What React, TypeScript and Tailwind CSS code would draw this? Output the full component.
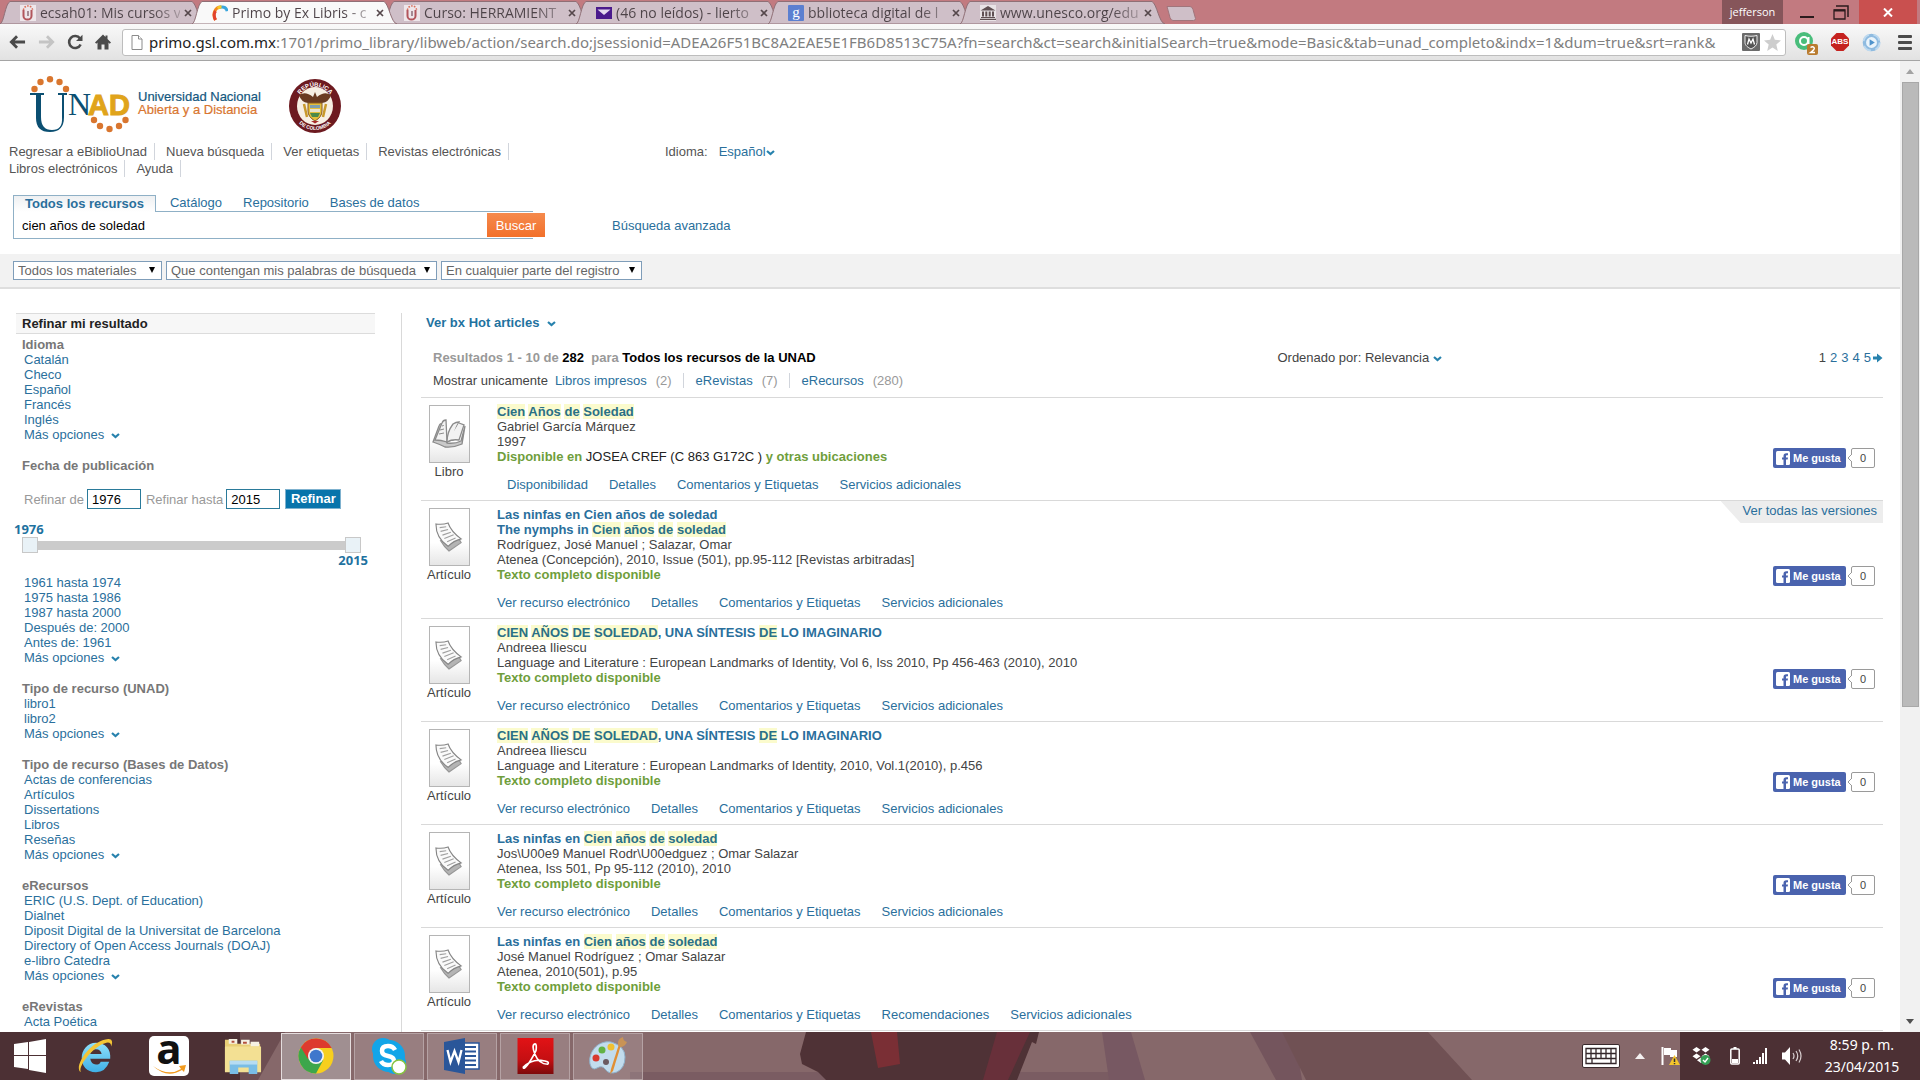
import type { ReactNode } from "react";

type Part = string | { hit: string };

const link = "text-[#2a6f9c] hover:underline";

/* ---------- browser chrome ---------- */

function UnadIcon() {
  return (
    <svg viewBox="0 0 16 16" className="h-4 w-4 shrink-0 bg-[#eee6ea]">
      <path d="M3.5 5v6a4 3.6 0 0 0 8 0V5" fill="none" stroke="#b2555c" strokeWidth="2" />
      <path d="M3.5 5a4.5 4 0 0 1 9 0" fill="none" stroke="#d9705c" strokeWidth="1.6" strokeDasharray="1.6 1.2" />
      <path d="M8 6v5" stroke="#7d5a66" strokeWidth="1.3" />
    </svg>
  );
}

function PrimoIcon() {
  return (
    <svg viewBox="0 0 16 16" className="h-4 w-4 shrink-0">
      <path d="M3.500 15C0 9 3 2 9 2" fill="none" stroke="#f28a1f" strokeWidth="3" />
      <path d="M8 2.200c4-.8 6.500 1 7.200 4" fill="none" stroke="#3aa6dd" strokeWidth="3" />
      <path d="M3.500 15C1.500 11 2 8 3.600 6" fill="none" stroke="#e2432d" strokeWidth="3" />
      <path d="M5.600 3.200C7 2.400 8 2 9.500 2.100" fill="none" stroke="#f6c928" strokeWidth="3" />
    </svg>
  );
}

function MailIcon() {
  return (
    <svg viewBox="0 0 16 16" className="h-4 w-4 shrink-0">
      <rect y="2" width="16" height="12" fill="#4a1a8c" />
      <path d="M1.500 4.500 8 10l6.500-5.500z" fill="#e4d9ee" />
    </svg>
  );
}

function GoogleIcon() {
  return (
    <span aria-hidden="true" className="flex h-4 w-4 shrink-0 items-center justify-center rounded-[1px] bg-[#5b7fd0] font-['Liberation_Serif',serif] text-[15px] leading-none text-white">
      g
    </span>
  );
}

function UnescoIcon() {
  return (
    <svg viewBox="0 0 16 16" className="h-4 w-4 shrink-0 bg-[#e9e3e6]" fill="#5f4f52">
      <path d="M8 1 0.500 5.500h15zM2 6.500h2v5H2zM5.300 6.500h2v5h-2zM8.700 6.500h2v5h-2zM12 6.500h2v5h-2zM1 12h14v1H1zM0 13.700h16V15H0z" />
    </svg>
  );
}

const tabs: { title: string; icon: ReactNode; active?: boolean }[] = [
  { title: "ecsah01: Mis cursos v", icon: <UnadIcon /> },
  { title: "Primo by Ex Libris - c", icon: <PrimoIcon />, active: true },
  { title: "Curso: HERRAMIENT", icon: <UnadIcon /> },
  { title: "(46 no leídos) - lierto", icon: <MailIcon /> },
  { title: "bblioteca digital de l", icon: <GoogleIcon /> },
  { title: "www.unesco.org/edu", icon: <UnescoIcon /> },
];

function TabStrip() {
  return (
    <header className="flex h-6 shrink-0 bg-[#c27a80] font-['Open_Sans',sans-serif]">
      <div className="flex min-w-0 pt-px pl-2">
        {tabs.map((t) => (
          <div key={t.title} className="relative flex w-48 items-center">
            <svg viewBox="0 0 206 23" preserveAspectRatio="none" className={t.active ? "absolute -left-2 z-10 h-full w-[206px]" : "absolute -left-2 h-full w-[206px]"}>
              <path d="M0 23C4 22 5 3 10 .5H192C197 3 199 22 205 23z" fill={t.active ? "#f9f9f9" : "#cfbfc8"} stroke="#8f6f76" strokeWidth="1" />
            </svg>
            <div className="relative z-10 flex w-full items-center gap-1 pr-2 pl-3">
              {t.icon}
              <span className="min-w-0 flex-1 bg-linear-to-r from-[#4d4348] from-80% to-[#4d4348]/30 bg-clip-text text-[14px] leading-5 whitespace-nowrap text-transparent">{t.title}</span>
              <button aria-label="Cerrar pestaña" className="w-2">
                <svg viewBox="0 0 8 8" className="h-2 w-2">
                  <path d="M1 1l6 6M7 1L1 7" stroke="#55474b" strokeWidth="1.700" />
                </svg>
              </button>
            </div>
          </div>
        ))}
        <button aria-label="Nueva pestaña" className="mt-[5px] ml-1.5 h-[15px] w-[30px]">
          <svg viewBox="0 0 30 15" className="h-full w-full">
            <path d="M1 .5h23q2 0 3 3l2.500 9q0 2-2 2H7q-2 0-3-3z" fill="#cfbfc8" stroke="#a0757b" />
          </svg>
        </button>
      </div>
      <div className="ml-auto flex pr-[3px]">
        <span className="flex w-[61px] items-center justify-center bg-[#86555a] text-[11px] text-white">jefferson</span>
        <button aria-label="Minimizar" className="flex w-12 items-end justify-center pb-1.5">
          <span className="h-0.5 w-3.5 bg-[#2b1b1d]" />
        </button>
        <button aria-label="Restaurar" className="flex w-7 items-center justify-start pl-0.5">
          <svg viewBox="0 0 16 15" className="h-[15px] w-4" fill="none" stroke="#2b1b1d">
            <path d="M3 1h12v11" strokeWidth="1.500" />
            <path d="M1 5h11v9H1z" strokeWidth="1.300" />
            <path d="M1 5.500h11" strokeWidth="2" />
          </svg>
        </button>
        <button aria-label="Cerrar" className="flex w-[58px] items-center justify-center bg-[#c9504f]">
          <svg viewBox="0 0 10 9" className="h-[9px] w-2.5">
            <path d="M1 .5l8 8M9 .5l-8 8" stroke="#fff" strokeWidth="2" />
          </svg>
        </button>
      </div>
    </header>
  );
}

function Toolbar() {
  return (
    <div className="flex h-[37px] shrink-0 items-center border-b border-[#a5a5a5] bg-linear-to-b from-[#f9f9f9] to-[#e2e2e2] pr-2 pl-[9px]">
      <div className="flex w-[113px] items-center gap-3">
        <button aria-label="Atrás">
          <svg viewBox="0 0 18 16" className="h-4 w-[17px]">
            <path d="M17 8H3M8.500 2 2.500 8l6 6" fill="none" stroke="#4a4a4a" strokeWidth="3" />
          </svg>
        </button>
        <button aria-label="Adelante">
          <svg viewBox="0 0 18 16" className="h-4 w-[17px]">
            <path d="M1 8h14M9.500 2l6 6-6 6" fill="none" stroke="#c4c4c4" strokeWidth="3" />
          </svg>
        </button>
        <button aria-label="Recargar">
          <svg viewBox="0 0 16 16" className="h-4 w-4">
            <path d="M13 4.500A6 6 0 1 0 13.600 10.500" fill="none" stroke="#4a4a4a" strokeWidth="2.600" />
            <path d="M15.500.8V7H9z" fill="#4a4a4a" />
          </svg>
        </button>
        <button aria-label="Inicio">
          <svg viewBox="0 0 16 16" className="h-4 w-4" fill="#4a4a4a">
            <path d="M8 .5 0 8.500l1.300 1.200L2.500 8.500V15.500h4v-5h3v5h4v-7l1.200 1.200L16 8.500 12.500 5V1.500h-2V3z" />
          </svg>
        </button>
      </div>
      <div className="flex h-[27px] min-w-0 flex-1 items-center rounded-[3px] border border-[#bdbdbd] bg-white px-1">
        <svg viewBox="0 0 12 15" className="mr-1.5 ml-1 h-[15px] w-3 shrink-0" fill="#fff" stroke="#8b8b8b">
          <path d="M1 .5h6.500L11 4v10.500H1z" />
          <path d="M7.500.5V4H11" />
        </svg>
        <p className="min-w-0 flex-1 overflow-hidden font-['Noto_Sans',sans-serif] text-[15px] leading-6 whitespace-nowrap text-[#808080]">
          <span className="text-[#222]">primo.gsl.com.mx</span>:1701/primo_library/libweb/action/search.do;jsessionid=ADEA26F51BC8A2EAE5E1FB6D8513C75A?fn=search&amp;ct=search&amp;initialSearch=true&amp;mode=Basic&amp;tab=unad_completo&amp;indx=1&amp;dum=true&amp;srt=rank&amp;
        </p>
        <svg viewBox="0 0 18 18" className="mr-1 h-[18px] w-[18px] shrink-0">
          <rect width="18" height="18" rx="1" fill="#6b6b6b" />
          <path d="M3 2.500c4 1 8 1 12 0v7c0 3-3 5-6 6.500-3-1.500-6-3.500-6-6.500z" fill="#555" stroke="#eee" />
          <path d="M5.500 11.500 7 6l2 4 2-4 1.500 5.500" fill="none" stroke="#fff" strokeWidth="1.300" />
        </svg>
        <svg viewBox="0 0 16 16" className="h-[17px] w-[17px] shrink-0" fill="#cdcdcd">
          <path d="M8 0l2.200 5.500 5.800.5-4.400 3.800L13 16 8 12.600 3 16l1.400-6.200L0 6l5.800-.5z" />
        </svg>
      </div>
      <div className="flex items-center gap-[13px] pl-2">
        <svg viewBox="0 0 24 26" className="h-[26px] w-6">
          <circle cx="10" cy="12" r="9" fill="#49bd7b" />
          <circle cx="10" cy="12" r="4" fill="none" stroke="#fff" strokeWidth="2" />
          <path d="M14.500 8v7.500" stroke="#fff" strokeWidth="2" />
          <rect x="13" y="15" width="11" height="11" rx="2" fill="#b97b2e" />
          <path d="M16.500 18.500q2-1.500 3.500 0t-3.500 5H21" fill="none" stroke="#fff" strokeWidth="1.400" />
        </svg>
        <span className="relative flex h-[18px] w-[18px] items-center justify-center font-['Liberation_Sans',sans-serif] text-[8px] leading-none font-bold text-white">
          <svg viewBox="0 0 18 18" className="absolute inset-0 h-full w-full">
            <path d="M5.500 0h7L18 5.500v7L12.500 18h-7L0 12.500v-7z" fill="#c5221f" />
          </svg>
          <span className="relative">ABS</span>
        </span>
        <svg viewBox="0 0 20 20" className="h-[19px] w-[19px]">
          <circle cx="10" cy="10" r="7.500" fill="#eaf4fb" stroke="#8fbbe0" strokeWidth="3.500" />
          <circle cx="10" cy="10" r="8.500" fill="none" stroke="#bdd9ef" strokeWidth="2" strokeDasharray="9 5" />
          <path d="M8 6.500v7l5.500-3.500z" fill="#4f93cc" />
        </svg>
        <button aria-label="Menú" className="ml-1 flex w-3.5 flex-col gap-[3px]">
          <span className="h-[3px] rounded-[1px] bg-[#4a4a4a]" />
          <span className="h-[3px] rounded-[1px] bg-[#4a4a4a]" />
          <span className="h-[3px] rounded-[1px] bg-[#4a4a4a]" />
        </button>
      </div>
    </div>
  );
}

/* ---------- library page ---------- */

function Chevron() {
  return (
    <svg viewBox="0 0 9 6" className="inline-block h-1.5 w-[9px]">
      <path d="M1 1l3.500 3L8 1" fill="none" stroke="#2782ad" strokeWidth="2.200" />
    </svg>
  );
}

function UnadLogo() {
  return (
    <svg viewBox="0 0 236 60" className="h-[60px] w-[236px]" role="img" aria-label="UNAD Universidad Nacional Abierta y a Distancia">
      <g fill="#d9762f">
        <circle cx="4.500" cy="13" r="3.200" />
        <circle cx="10.500" cy="6" r="3.200" />
        <circle cx="20" cy="3.200" r="3.200" />
        <circle cx="29.500" cy="6" r="3.200" />
        <circle cx="36" cy="13" r="3.200" />
        <circle cx="64" cy="44" r="3.200" />
        <circle cx="70" cy="50" r="3.200" />
        <circle cx="79.500" cy="53" r="3.200" />
        <circle cx="89" cy="50" r="3.200" />
        <circle cx="95.500" cy="44" r="3.200" />
      </g>
      <path d="M0 17h14v2h-3v22q0 13 11 13t10-13V19h-4v-2h9v2h-3v22q0 15-14 15T6 42V19H0z" fill="#0b4f72" />
      <text x="38" y="39" fontFamily="Liberation Serif, serif" fontSize="32" fill="#0b4f72">N</text>
      <text x="58" y="39" fontFamily="Liberation Sans, sans-serif" fontSize="29" fontWeight="bold" fill="#e0a41b" stroke="#e0a41b" strokeWidth="1">AD</text>
      <text x="108" y="25" fontFamily="Liberation Sans, sans-serif" fontSize="13" fill="#14577e" stroke="#14577e" strokeWidth=".2">Universidad Nacional</text>
      <text x="108" y="38" fontFamily="Liberation Sans, sans-serif" fontSize="13" fill="#d97630" stroke="#d97630" strokeWidth=".2">Abierta y a Distancia</text>
    </svg>
  );
}

function Seal() {
  return (
    <svg viewBox="0 0 54 56" className="h-14 w-[54px]" role="img" aria-label="República de Colombia">
      <defs>
        <path id="arc-top" d="M8.500 28a18.500 19.500 0 0 1 37 0" />
        <path id="arc-bottom" d="M4 28a23 24 0 0 0 46 0" />
      </defs>
      <ellipse cx="27" cy="28" rx="26" ry="27" fill="#6d1a20" />
      <ellipse cx="27" cy="28" rx="18" ry="19" fill="#f7efe3" />
      <text fontFamily="Liberation Sans, sans-serif" fontSize="6" fontWeight="bold" fill="#fff">
        <textPath href="#arc-top" startOffset="50%" textAnchor="middle">REPÚBLICA</textPath>
      </text>
      <text fontFamily="Liberation Sans, sans-serif" fontSize="5" fontWeight="bold" fill="#fff">
        <textPath href="#arc-bottom" startOffset="50%" textAnchor="middle">DE COLOMBIA</textPath>
      </text>
      <path d="M11 17q5-3 9-1 3 1 5 3l2-5 2 5q2-2 5-3 4-2 9 1-2 7-9 8H20q-7-1-9-8z" fill="#6a3b22" />
      <path d="M20 25h14v8q0 6-7 10-7-4-7-10z" fill="#e4be3b" stroke="#8a5a24" />
      <path d="M22 27h10v3H22z" fill="#7f9fae" />
      <path d="M22 31h10v3H22z" fill="#e9e2cf" />
      <path d="M22 35h10l-2 4h-6z" fill="#4d8a4a" />
      <path d="M16 26l3 13M38 26l-3 13" stroke="#c9992b" strokeWidth="2.500" />
      <path d="M23 43h8l-4 2.500z" fill="#a82a2a" />
    </svg>
  );
}

function NavRow({ items }: { items: string[] }) {
  return (
    <div className="flex">
      {items.map((n) => (
        <a key={n} href="#" className="mr-[11px] border-r border-gray-300 pr-[7px] leading-[17px] text-[#555]">
          {n}
        </a>
      ))}
    </div>
  );
}

function PageHeader() {
  return (
    <div className="pt-[15px]">
      <div className="flex items-center gap-[22px] pl-[30px]">
        <UnadLogo />
        <Seal />
      </div>
      <div className="mt-[7px] flex pl-[9px]">
        <nav className="w-[656px]">
          <NavRow items={["Regresar a eBiblioUnad", "Nueva búsqueda", "Ver etiquetas", "Revistas electrónicas"]} />
          <NavRow items={["Libros electrónicos", "Ayuda"]} />
        </nav>
        <span className="leading-[17px] text-[#555]">Idioma:</span>
        <a href="#" className={`ml-[11px] leading-[17px] ${link}`}>
          Español
          <Chevron />
        </a>
      </div>
    </div>
  );
}

function SearchBox() {
  return (
    <form className="mt-[18px] flex pl-[13px]">
      <div className="w-[532px]">
        <div className="flex items-end text-[13px]">
          <a href="#" className="z-10 -mb-px border border-b-0 border-[#8fb0c6] bg-linear-to-b from-[#eef0f2] to-white px-[11px] leading-4 font-bold text-[#2a6f9c]">
            Todos los recursos
          </a>
          {["Catálogo", "Repositorio", "Bases de datos"].map((t, i) => (
            <a key={t} href="#" className={i === 0 ? `ml-3.5 leading-4 ${link}` : `ml-[21px] leading-4 ${link}`}>
              {t}
            </a>
          ))}
        </div>
        <div className="flex items-center border-y border-l border-[#8fb0c6] py-px [border-image:linear-gradient(to_right,#8fb0c6_97.5%,transparent_97.5%)_1]">
          <input aria-label="Buscar" defaultValue="cien años de soledad" className="h-6 min-w-0 flex-1 px-2 text-black outline-none" />
          <button type="button" className="h-6 w-[58px] bg-linear-to-b from-[#f58a4c] to-[#f2702a] text-white">
            Buscar
          </button>
        </div>
      </div>
      <a href="#" className={`mt-[23px] ml-[67px] leading-4 ${link}`}>
        Búsqueda avanzada
      </a>
    </form>
  );
}

function FilterSelect({ label, width }: { label: string; width: string }) {
  return (
    <span className={`relative ${width}`}>
      <select aria-label={label} className="h-[19px] w-full appearance-none border border-[#7f9db9] bg-white pl-1 text-[13px] leading-4 text-[#666]">
        <option>{label}</option>
      </select>
      <span className="pointer-events-none absolute top-[6px] right-[7px] border-x-[3px] border-t-[6px] border-x-transparent border-t-black" />
    </span>
  );
}

function Facet({ title, items }: { title: string; items: string[] }) {
  return (
    <section className="mb-4">
      <h3 className="pl-[6px] font-bold text-[#777]">{title}</h3>
      <FacetList items={items} />
    </section>
  );
}

function FacetList({ items }: { items: string[] }) {
  return (
    <ul className="pl-2">
      {items.map((it) => (
        <li key={it}>
          <a href="#" className={link}>
            {it}
          </a>
        </li>
      ))}
      <li>
        <a href="#" className={link}>
          Más opciones <span className="ml-[3px]"><Chevron /></span>
        </a>
      </li>
    </ul>
  );
}

function Sidebar() {
  return (
    <aside className="w-[359px] shrink-0">
      <h2 className="mb-[3px] border-y border-[#dcdcdc] bg-[#f7f7f7] pl-1.5 leading-[19px] font-bold text-[#222]">Refinar mi resultado</h2>
      <Facet title="Idioma" items={["Catalán", "Checo", "Español", "Francés", "Inglés"]} />
      <section className="mb-4">
        <h3 className="pl-[6px] font-bold text-[#777]">Fecha de publicación</h3>
        <div className="mt-4 flex items-center pl-2 text-[#999]">
          <label htmlFor="from">Refinar de</label>
          <input id="from" defaultValue="1976" className="ml-[3px] h-5 w-[54px] border border-[#2a7a9a] px-1 text-black" />
          <label htmlFor="to" className="ml-[5px]">Refinar hasta</label>
          <input id="to" defaultValue="2015" className="ml-[3px] h-5 w-[54px] border border-[#2a7a9a] px-1 text-black" />
          <button className="ml-[5px] h-5 w-14 border border-[#7fb2cf] bg-[#0874ab] leading-4 font-bold text-white">Refinar</button>
        </div>
        <div className="mt-[13px] -ml-0.5 font-['Open_Sans',sans-serif] font-bold text-[#1f72a0]">1976</div>
        <div className="ml-[6px] flex w-[339px] items-center">
          <button aria-label="Año inicial" className="h-4 w-4 border border-[#c8c8c8] bg-[#e9f2f7]" />
          <span className="h-[9px] flex-1 bg-[#cbcbcb]" />
          <button aria-label="Año final" className="h-4 w-4 border border-[#c8c8c8] bg-[#e9f2f7]" />
        </div>
        <div className="mr-[7px] mb-[7px] text-right font-['Open_Sans',sans-serif] font-bold text-[#1f72a0]">2015</div>
        <FacetList items={["1961 hasta 1974", "1975 hasta 1986", "1987 hasta 2000", "Después de: 2000", "Antes de: 1961"]} />
      </section>
      <Facet title="Tipo de recurso (UNAD)" items={["libro1", "libro2"]} />
      <Facet title="Tipo de recurso (Bases de Datos)" items={["Actas de conferencias", "Artículos", "Dissertations", "Libros", "Reseñas"]} />
      <Facet
        title="eRecursos"
        items={["ERIC (U.S. Dept. of Education)", "Dialnet", "Diposit Digital de la Universitat de Barcelona", "Directory of Open Access Journals (DOAJ)", "e-libro Catedra"]}
      />
      <Facet title="eRevistas" items={["Acta Poética", "Andamios"]} />
    </aside>
  );
}

function BookIcon() {
  return (
    <svg viewBox="0 0 36 32" className="h-8 w-9" fill="#f2f2f2" stroke="#8b8b8b" strokeWidth="1.300">
      <path d="M2 24 8 8q1-3 3-2l5 19q8 1 14-2l4-15-3 18q-9 4-17 3-6-3-12-5z" fill="#c9c9c9" />
      <path d="M4 22 11 5q1-3 4-3l1 22q-6-2-12-2z" />
      <path d="M16 24q0-10 6-18 3-2 6-2-5 8-6 18-3 0-6 2z" />
      <path d="M16 24q5-3 12-2l5-15-5-2" />
      <path d="M11 8q2-1 2 0M9 12l4-1M8 16l5-1" strokeWidth="1" />
    </svg>
  );
}

function ArticleIcon() {
  return (
    <svg viewBox="0 0 30 32" className="h-[30px] w-7" strokeWidth="1.200">
      <path d="M6 20q4 7 9 11l13-9-3-5z" fill="#b4b4b4" stroke="#969696" />
      <path d="M1 2q7 1 13-1 3 9 14 17-8 2-14 8Q1 17 1 2z" fill="#fafafa" stroke="#858585" />
      <path d="M5 6l7-1M6 10l8-2M8 14l9-3M10 17.500l10-4M13 21l9-4" stroke="#a0a0a0" fill="none" />
    </svg>
  );
}

type Result = { kind: "Libro" | "Artículo"; titles: Part[][]; author: string; source: string; links: string[]; versions?: boolean };

const base = ["Ver recurso electrónico", "Detalles", "Comentarios y Etiquetas"];
const phrase: Part[] = [{ hit: "Cien" }, " ", { hit: "años" }, " ", { hit: "de" }, " ", { hit: "soledad" }];
const synthesis: Part[] = [{ hit: "CIEN" }, " ", { hit: "AÑOS" }, " ", { hit: "DE" }, " ", { hit: "SOLEDAD" }, ", UNA SÍNTESIS ", { hit: "DE" }, " LO IMAGINARIO"];

const results: Result[] = [
  {
    kind: "Libro",
    titles: [[{ hit: "Cien" }, " ", { hit: "Años" }, " ", { hit: "de" }, " ", { hit: "Soledad" }]],
    author: "Gabriel García Márquez",
    source: "1997",
    links: ["Disponibilidad", "Detalles", "Comentarios y Etiquetas", "Servicios adicionales"],
  },
  {
    kind: "Artículo",
    titles: [["Las ninfas en Cien años de soledad"], ["The nymphs in ", ...phrase]],
    author: "Rodríguez, José Manuel ; Salazar, Omar",
    source: "Atenea (Concepción), 2010, Issue (501), pp.95-112 [Revistas arbitradas]",
    links: [...base, "Servicios adicionales"],
    versions: true,
  },
  {
    kind: "Artículo",
    titles: [synthesis],
    author: "Andreea Iliescu",
    source: "Language and Literature : European Landmarks of Identity, Vol 6, Iss 2010, Pp 456-463 (2010), 2010",
    links: [...base, "Servicios adicionales"],
  },
  {
    kind: "Artículo",
    titles: [synthesis],
    author: "Andreea Iliescu",
    source: "Language and Literature : European Landmarks of Identity, 2010, Vol.1(2010), p.456",
    links: [...base, "Servicios adicionales"],
  },
  {
    kind: "Artículo",
    titles: [["Las ninfas en ", ...phrase]],
    author: "Jos\\U00e9 Manuel Rodr\\U00edguez ; Omar Salazar",
    source: "Atenea, Iss 501, Pp 95-112 (2010), 2010",
    links: [...base, "Servicios adicionales"],
  },
  {
    kind: "Artículo",
    titles: [["Las ninfas en ", ...phrase]],
    author: "José Manuel Rodríguez ; Omar Salazar",
    source: "Atenea, 2010(501), p.95",
    links: [...base, "Recomendaciones", "Servicios adicionales"],
  },
];

function LikeButton() {
  return (
    <div className="flex items-center">
      <button className="flex h-5 w-[73px] items-center gap-[3px] rounded-[2px] bg-[#4a63ae] pl-[3px] text-[11px] font-bold text-white">
        <svg viewBox="0 0 14 14" className="h-3.5 w-3.5 shrink-0">
          <rect width="14" height="14" rx="1.500" fill="#fff" />
          <path d="M7.500 14V8.500H6v-2h1.500V5q0-2.700 2.700-2.700H12v2h-1.200Q10 4.300 10 5v1.500h2l-.3 2H10V14z" fill="#4a63ae" />
        </svg>
        Me gusta
      </button>
      <svg viewBox="0 0 6 8" className="z-10 -mr-px h-2 w-1.5">
        <path d="M6 0 2 4l4 4" fill="#fff" stroke="#9a9a9a" />
      </svg>
      <span className="flex h-5 w-6 items-center justify-center rounded-[2px] border border-[#9a9a9a] bg-white text-[11px] text-[#444]">0</span>
    </div>
  );
}

function ResultRow({ r }: { r: Result }) {
  const book = r.kind === "Libro";
  return (
    <li className="relative flex border-t border-[#d9d9d9] pl-1.5">
      <div className="mt-[7px] flex w-11 flex-col items-center">
        <span className="flex h-[58px] w-[41px] items-center justify-center border border-[#b5b5b5] bg-linear-to-b from-white from-60% to-[#e6e6e6]">
          {book ? <BookIcon /> : <ArticleIcon />}
        </span>
        <span className="mt-px text-[#444]">{r.kind}</span>
      </div>
      <div className="mt-1.5 ml-[26px] min-w-0 flex-1 text-[#444]">
        {r.titles.map((parts, i) => (
          <h3 key={i} className="font-bold">
            <a href="#" className={link}>
              {parts.map((p, j) =>
                typeof p === "string" ? p : <mark key={j} className="bg-[#fbfbcd] text-[#2a7086]">{p.hit}</mark>,
              )}
            </a>
          </h3>
        ))}
        <p>{r.author}</p>
        <p>{r.source}</p>
        <p className="font-bold text-[#6f9e3c]">
          {book ? (
            <>
              Disponible en <span className="font-normal text-[#222]">JOSEA CREF (C 863 G172C )</span> y otras ubicaciones
            </>
          ) : (
            "Texto completo disponible"
          )}
        </p>
        <div className={book ? "mt-[13px] mb-2 flex gap-[21px] pl-2.5" : "mt-[13px] mb-2 flex gap-[21px]"}>
          {r.links.map((l) => (
            <a key={l} href="#" className={link}>
              {l}
            </a>
          ))}
        </div>
      </div>
      <div className="mr-2 mb-8 self-end">
        <LikeButton />
      </div>
      {r.versions && (
        <a href="#" className="absolute top-0 right-0 h-[22px] bg-[#ededed] pr-1.5 pl-[22px] leading-5 text-[#2a6f9c] [clip-path:polygon(0_0,100%_0,100%_100%,20px_100%)]">
          Ver todas las versiones
        </a>
      )}
    </li>
  );
}

function Results() {
  return (
    <main className="ml-[26px] min-w-0 flex-1 border-l border-[#d9d9d9] pr-[17px] pl-[19px]">
      <a href="#" className="ml-[5px] block pt-0.5 font-bold text-[#1f72a0]">
        Ver bx Hot articles <span className="ml-1"><Chevron /></span>
      </a>
      <div className="mt-5 flex items-center pl-3">
        <p className="flex-1 font-bold whitespace-pre text-[#999]">
          Resultados 1 - 10 de <span className="text-black">282</span>{"  "}para <span className="text-black">Todos los recursos de la UNAD</span>
        </p>
        <p className="text-[#444]">
          Ordenado por: <button>Relevancia <Chevron /></button>
        </p>
        <nav className="ml-[377px] flex items-center gap-1">
          <span className="text-[#444]">1</span>
          {["2", "3", "4", "5"].map((n) => (
            <a key={n} href="#" className={link}>
              {n}
            </a>
          ))}
          <a href="#" aria-label="Siguiente" className="-ml-0.5">
            <svg viewBox="0 0 10 10" className="h-2.5 w-2.5">
              <path d="M0 3.500h4V.5L9.500 5 4 9.500v-3H0z" fill="#2782ad" />
            </svg>
          </a>
        </nav>
      </div>
      <div className="mt-2 flex pb-[9px] pl-3">
        <span className="mr-[7px] text-[#444]">Mostrar unicamente</span>
        {[
          ["Libros impresos", "(2)"],
          ["eRevistas", "(7)"],
          ["eRecursos", "(280)"],
        ].map(([name, count], i) => (
          <span key={name} className={i < 2 ? "mr-3 flex gap-[9px] border-r border-gray-300 pr-[11px]" : "flex gap-[9px]"}>
            <a href="#" className={link}>
              {name}
            </a>
            <span className="text-[#999]">{count}</span>
          </span>
        ))}
      </div>
      <ul className="border-b border-[#d9d9d9]">
        {results.map((r, i) => (
          <ResultRow key={i} r={r} />
        ))}
      </ul>
    </main>
  );
}

function Scrollbar() {
  return (
    <div className="flex w-5 shrink-0 flex-col items-center bg-[#f1f1f1] py-2">
      <span className="border-x-[4px] border-b-[5px] border-x-transparent border-b-[#a3a3a3]" />
      <div className="mt-2 w-[17px] flex-1">
        <div className="h-2/3 border border-[#a8a8a8] bg-[#bababa]" />
      </div>
      <span className="border-x-[4px] border-t-[5px] border-x-transparent border-t-[#505050]" />
    </div>
  );
}

/* ---------- taskbar ---------- */

function WindowsIcon() {
  return (
    <svg viewBox="0 0 32 34" className="h-[34px] w-8" fill="#fff">
      <path d="M0 5l14-2v13H0zM15 3l17-3v16H15zM0 17h14v13L0 28zM15 17h17v17l-17-3z" />
    </svg>
  );
}

function ExplorerIcon() {
  return (
    <svg viewBox="0 0 40 40" className="h-[38px] w-10">
      <defs>
        <linearGradient id="ie" x1="0" y1="0" x2="0" y2="1">
          <stop offset="0" stopColor="#8fe0fa" />
          <stop offset="1" stopColor="#3fb0e6" />
        </linearGradient>
      </defs>
      <path d="M21 6c10 0 16 7 15 17H15q1 6 6 6 4 0 5-3h9q-4 11-14 11C11 37 6 30 6 22S12 6 21 6zm0 7q-5 0-6 5h12q-1-5-6-5z" fill="url(#ie)" />
      <path d="M5 37C-3 32 14 4 34 2q6 0 3 8 0-5-5-4C19 9 2 30 5 37z" fill="#f4c535" />
    </svg>
  );
}

function AmazonIcon() {
  return (
    <svg viewBox="0 0 40 40" className="h-10 w-10">
      <rect width="40" height="40" rx="5" fill="#fff" />
      <text x="20" y="28" textAnchor="middle" fontFamily="Open Sans, sans-serif" fontSize="42" fontWeight="bold" fill="#111">a</text>
      <path d="M4 30q15 11 28 3l-2-3 7-1-2 7-2-2Q18 43 4 30z" fill="#f29a1d" />
    </svg>
  );
}

function FolderIcon() {
  return (
    <svg viewBox="0 0 40 40" className="h-[38px] w-10">
      <path d="M1 3h11l2 4h24v29H1z" fill="#e9cf77" />
      <path d="M5 2h9v5H5zM18 3h9v5h-9zM28 5h9v5h-9z" fill="#f5f1e4" />
      <path d="M8 4h3v2H8zM20 5h4v2h-4z" fill="#b5523c" />
      <path d="M1 10h38v27H1z" fill="#f3e093" />
      <path d="M6 25h29v14h-9v-7H15v7H6z" fill="#79bde6" />
      <path d="M6 25h29v4H6z" fill="#b6dcf2" />
    </svg>
  );
}

function ChromeIcon() {
  return (
    <svg viewBox="0 0 36 36" className="h-9 w-9">
      <circle cx="18" cy="18" r="17.500" fill="#f7cf1e" />
      <path d="M18 18 2.900 9.200A17.500 17.500 0 0 0 18 35.500l7-13z" fill="#3da64b" />
      <path d="M2.900 9.200a17.500 17.500 0 0 1 30.800.8H18l-8 11z" fill="#dd3a2e" />
      <circle cx="18" cy="18" r="8" fill="#f4f4f4" />
      <circle cx="18" cy="18" r="6.300" fill="#3e77cc" />
    </svg>
  );
}

function SkypeIcon() {
  return (
    <svg viewBox="0 0 36 38" className="h-[38px] w-9">
      <circle cx="12" cy="12" r="11" fill="#12a5e8" />
      <circle cx="24" cy="26" r="11" fill="#12a5e8" />
      <circle cx="18" cy="19" r="16" fill="#12a5e8" />
      <path d="M24 11q-2-4-7-4-6 0-6 5 0 4 6 5t6 5q0 4-6 4-5 0-7-4" transform="translate(0 2)" fill="none" stroke="#fff" strokeWidth="4.500" />
      <circle cx="28" cy="30" r="7" fill="#fff" stroke="#86c440" strokeWidth="1.500" />
    </svg>
  );
}

function WordIcon() {
  return (
    <svg viewBox="0 0 36 38" className="h-[38px] w-9">
      <path d="M19 6h16v26H19z" fill="#fff" stroke="#2a5699" strokeWidth="1.500" />
      <path d="M21 10h11M21 14.500h11M21 19h11M21 23.500h11M21 28h11" stroke="#2a5699" strokeWidth="2" />
      <path d="M0 5l21-4v36L0 33z" fill="#2a5699" />
      <path d="M3.500 13l3 12 4-11 4 11 3-12" fill="none" stroke="#fff" strokeWidth="2.300" />
    </svg>
  );
}

function AcrobatIcon() {
  return (
    <svg viewBox="0 0 37 37" className="h-9 w-[37px]">
      <defs>
        <linearGradient id="pdf" x1="0" y1="0" x2="0" y2="1">
          <stop offset="0" stopColor="#e21316" />
          <stop offset=".6" stopColor="#c50f12" />
          <stop offset="1" stopColor="#7d090b" />
        </linearGradient>
      </defs>
      <rect width="37" height="37" fill="url(#pdf)" />
      <path d="M18 6q-4 1 0 11t13 10q3-3-7-4T6 30q0 3 4-2t9-15q1-7-1-7z" fill="none" stroke="#fff" strokeWidth="1.700" />
    </svg>
  );
}

function PaintIcon() {
  return (
    <svg viewBox="0 0 38 38" className="h-[38px] w-[38px]">
      <path d="M22 5C8 3-1 16 1 27q2 7 7 4t8 1q4 6 12 3 8-4 8-15T22 5z" fill="#c2dced" stroke="#8fb2cc" />
      <circle cx="7" cy="21" r="3.500" fill="#d8392f" />
      <circle cx="13" cy="13" r="3.500" fill="#62b245" />
      <circle cx="22" cy="10" r="3.500" fill="#f0c030" />
      <circle cx="17" cy="25" r="3" fill="#6a5a60" />
      <path d="M32 8 24 34l-3 3 1-5 8-25z" fill="#e08f35" />
      <path d="M29 8q-1-6 5-8 0 4 4 5-2 5-7 5z" fill="#c99356" />
    </svg>
  );
}

const pinned = [
  { name: "Internet Explorer", icon: <ExplorerIcon /> },
  { name: "Amazon", icon: <AmazonIcon /> },
  { name: "Explorador de archivos", icon: <FolderIcon /> },
];
const running = [
  { name: "Google Chrome", icon: <ChromeIcon />, active: true },
  { name: "Skype", icon: <SkypeIcon /> },
  { name: "Word", icon: <WordIcon /> },
  { name: "Adobe Reader", icon: <AcrobatIcon /> },
  { name: "Paint", icon: <PaintIcon /> },
];

function Tray() {
  return (
    <div className="flex items-center text-white">
      <svg viewBox="0 0 38 24" className="mr-[15px] h-6 w-[38px]">
        <rect x=".5" y=".5" width="37" height="23" rx="1.500" fill="#fff" stroke="#3a2a2d" />
        <path d="M4 4.500h30v5H4zM4 9.500h30v5H4zM4 14.500h30v5H4zM9 4.500v10M14 4.500v10M19 4.500v10M24 4.500v10M29 4.500v15M10 14.500v5" fill="none" stroke="#33272a" strokeWidth="1.300" />
      </svg>
      <svg viewBox="0 0 10 6" className="mr-4 h-1.5 w-2.5" fill="#f4f0f0">
        <path d="M5 0l5 6H0z" />
      </svg>
      <svg viewBox="0 0 20 20" className="mr-2.5 h-5 w-5">
        <path d="M1.500 1v18" stroke="#fff" strokeWidth="2" />
        <path d="M3 2h7v2h6v7h-7V9H3z" fill="#fff" />
        <path d="M13.500 9l5.500 10H8z" fill="#f5c62c" />
        <path d="M13.500 12.500v3.500M13.500 17v1.300" stroke="#333" strokeWidth="1.500" />
      </svg>
      <svg viewBox="0 0 20 20" className="mr-[19px] h-5 w-5" fill="#fff">
        <path d="M5.500 1l4 2.700-4 2.700-4-2.700zM14.500 1l4 2.700-4 2.700-4-2.700zM5.500 7.500l4 2.700-4 2.700-4-2.700zM14.500 7.500l4 2.700-4 2.700-4-2.700zM10 11.500l4 2.700-4 2.700-4-2.700z" />
        <circle cx="14.500" cy="14" r="5" fill="#35a055" />
        <path d="M12 14l2 2 3-4" fill="none" stroke="#fff" strokeWidth="1.400" />
      </svg>
      <svg viewBox="0 0 10 18" className="mr-[13px] h-[18px] w-2.5">
        <path d="M3.500 0h3v2h-3zM2 12h6v4H2z" fill="#fff" />
        <rect x=".8" y="2" width="8.400" height="15" rx="1" fill="none" stroke="#fff" strokeWidth="1.500" />
      </svg>
      <svg viewBox="0 0 15 16" className="mr-3.5 h-4 w-[15px]" fill="#fff">
        <path d="M0 14h2v2H0zM3 12h2v4H3zM6 9h2v7H6zM9 5h2v11H9zM12 0h2v16h-2z" />
      </svg>
      <svg viewBox="0 0 20 18" className="mr-5 h-[18px] w-5">
        <path d="M0 5.500h3L8 0v18l-5-5.500H0z" fill="#fff" />
        <path d="M11 6q2 3 0 6M14 4q3.500 5 0 10M17 2.500q4 6.500 0 13" fill="none" stroke="#d9cfd0" strokeWidth="1.200" />
      </svg>
      <div className="w-20 text-center font-['Noto_Sans',sans-serif] text-[14px] leading-[22px] whitespace-nowrap">
        <p>8:59 p. m.</p>
        <p>23/04/2015</p>
      </div>
    </div>
  );
}

function Taskbar() {
  return (
    <footer className="relative flex h-12 shrink-0 justify-between bg-[#4c3034] pr-[18px] pl-3.5">
      <svg viewBox="0 0 1440 48" preserveAspectRatio="none" className="absolute inset-y-0 right-[240px] left-[240px] h-full w-[calc(100%-480px)]">
        <path d="M0 0h1440v48H0z" fill="#86686a" />
        <path d="M0 0h45L18 48H0z" fill="#6d4e52" />
        <path d="M390 40h210l-5 8H390zM760 40h140v8H750z" fill="#7a5c62" />
        <path d="M862 0h29l14 48h-36z" fill="#775862" />
        <path d="M1010 0h44l8 48h-26z" fill="#74555d" />
        <path d="M1042 0h146l44 48h-166z" fill="#705154" />
        <path d="M566 0h233l-3 12-4-2-15 38H586l-8-8-16-8-2-10z" fill="#4f3236" />
        <path d="M631 0h26l3 32-22 4z" fill="#7a2f35" />
        <path d="M757 0h33l-22 48h-25z" fill="#68303a" />
      </svg>
      <div className="relative flex items-center">
        <button aria-label="Inicio">
          <WindowsIcon />
        </button>
        <div className="mr-[18px] ml-[29px] flex gap-[34px]">
          {pinned.map((p) => (
            <button key={p.name} aria-label={p.name}>
              {p.icon}
            </button>
          ))}
        </div>
        <div className="flex gap-[3px]">
          {running.map((p) => (
            <button
              key={p.name}
              aria-label={p.name}
              className={
                p.active
                  ? "flex h-[47px] w-[70px] items-center justify-center border border-[#e4dcdd] bg-[#a08f91]"
                  : "flex h-[47px] w-[70px] items-center justify-center border border-[#b5a2a4] bg-white/15"
              }
            >
              {p.icon}
            </button>
          ))}
        </div>
      </div>
      <div className="relative flex">
        <Tray />
      </div>
    </footer>
  );
}

export default function App() {
  return (
    <div className="flex h-screen flex-col overflow-hidden bg-white">
      <TabStrip />
      <Toolbar />
      <div className="flex min-h-0 flex-1">
        <div className="min-w-0 flex-1 overflow-hidden font-['Liberation_Sans',Arial,sans-serif] text-[13px] leading-[15px]">
          <PageHeader />
          <SearchBox />
          <div className="mt-[15px] flex gap-1 border-b-2 border-[#dedede] bg-[#f2f2f2] py-[7px] pl-[13px]">
            <FilterSelect label="Todos los materiales" width="w-[149px]" />
            <FilterSelect label="Que contengan mis palabras de búsqueda" width="w-[271px]" />
            <FilterSelect label="En cualquier parte del registro" width="w-[201px]" />
          </div>
          <div className="mt-6 flex pl-4">
            <Sidebar />
            <Results />
          </div>
        </div>
        <Scrollbar />
      </div>
      <Taskbar />
    </div>
  );
}
